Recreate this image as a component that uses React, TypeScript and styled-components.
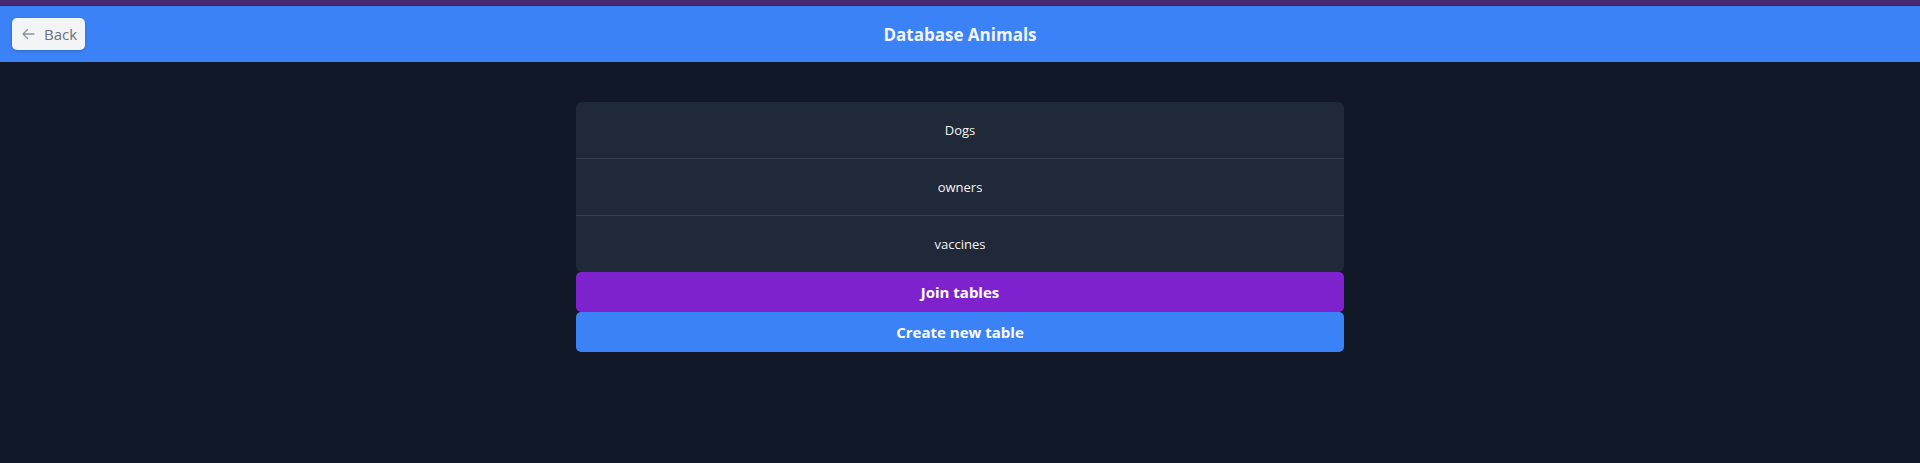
import React from "react";
import styled, { createGlobalStyle } from "styled-components";

const Global = createGlobalStyle`
  html, body { margin: 0; padding: 0; background: #111827; }
  body { font-family: "Open Sans", "Noto Sans", "Liberation Sans", sans-serif; }
  * { box-sizing: border-box; }
`;

const Page = styled.div`
  min-height: 463px;
  background: #111827;
  border-top: 5px solid #47296f;
`;

const Header = styled.header`
  display: grid;
  grid-template-columns: 1fr auto 1fr;
  align-items: center;
  height: 57px;
  background: #3b82f6;
  border-top: 1px solid #35215f;
  padding: 0 12px;
`;

const BackButton = styled.button`
  justify-self: start;
  display: flex;
  align-items: center;
  gap: 9px;
  height: 32px;
  width: 73px;
  padding: 0 0 0 10px;
  border: none;
  border-radius: 5px;
  background: #f3f4f6;
  color: #6b7280;
  font-family: inherit;
  font-size: 15px;
  box-shadow: 0 1px 3px rgba(0, 0, 0, 0.2);
  cursor: pointer;
`;

const Title = styled.h1`
  margin: 0;
  color: #f3f4f6;
  font-size: 17px;
  font-weight: 700;
`;

const Main = styled.main`
  padding-top: 40px;
  display: flex;
  justify-content: center;
`;

const Column = styled.div`
  width: 768px;
  display: flex;
  flex-direction: column;
`;

const Card = styled.ul`
  list-style: none;
  margin: 0;
  padding: 0;
  background: #1f2937;
  border-radius: 6px;
  overflow: hidden;
`;

const Row = styled.li`
  height: 56px;
  display: flex;
  align-items: center;
  justify-content: center;
  color: #f3f4f6;
  font-size: 13px;
  & + & {
    border-top: 1px solid #374151;
    height: 57px;
  }
`;

const ActionButton = styled.button<{ $bg: string }>`
  height: 40px;
  width: 100%;
  border: none;
  border-radius: 5px;
  background: ${(p) => p.$bg};
  color: #ffffff;
  font-family: inherit;
  font-size: 15px;
  font-weight: 700;
  cursor: pointer;
`;

const tables = ["Dogs", "owners", "vaccines"];

export default function App() {
  return (
    <>
      <Global />
      <Page>
        <Header>
          <BackButton>
            <svg width="13" height="12" viewBox="0 0 13 12" fill="none" stroke="#8b93a1" strokeWidth="1.3" strokeLinecap="round" strokeLinejoin="round">
              <path d="M12 6H1M5.5 1.5L1 6l4.5 4.5" />
            </svg>
            Back
          </BackButton>
          <Title>Database Animals</Title>
          <div />
        </Header>
        <Main>
          <Column>
            <Card>
              {tables.map((t) => (
                <Row key={t}>{t}</Row>
              ))}
            </Card>
            <ActionButton $bg="#7e22ce">Join tables</ActionButton>
            <ActionButton $bg="#3b82f6">Create new table</ActionButton>
          </Column>
        </Main>
      </Page>
    </>
  );
}
